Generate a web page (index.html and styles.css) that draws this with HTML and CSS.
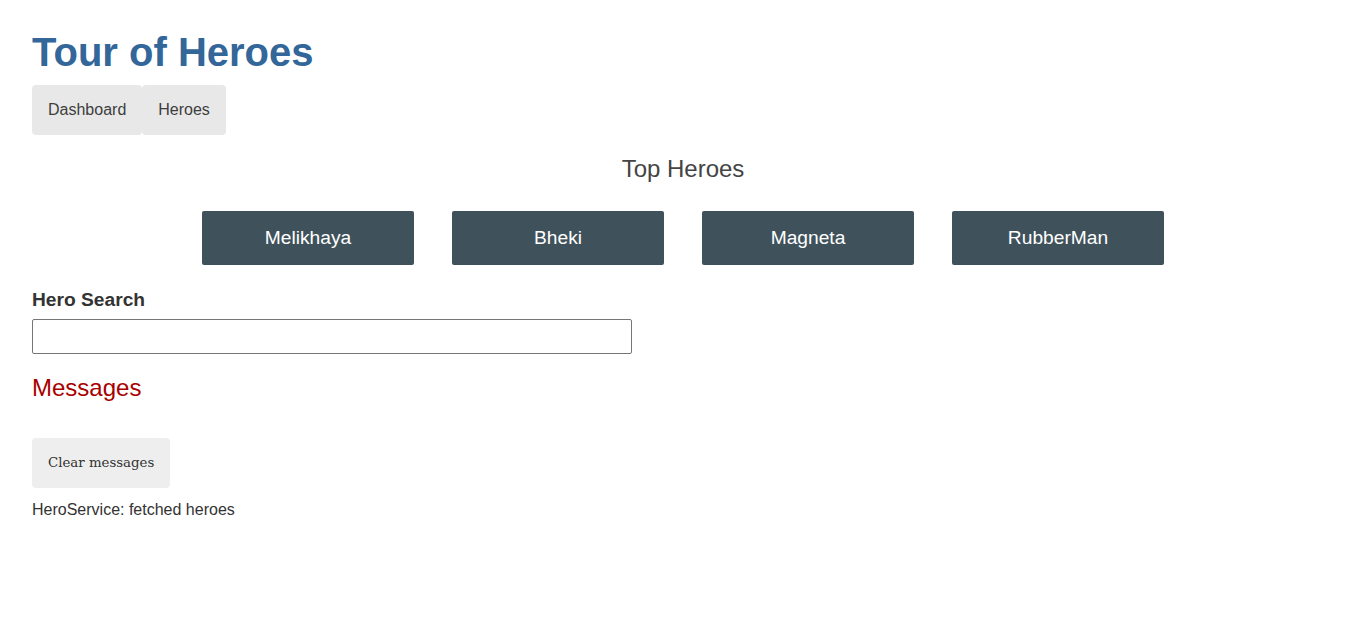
FILE: index.html
```html
<!DOCTYPE html>
<html>
<head>
<meta charset="utf-8">
<title>Tour of Heroes</title>
<link rel="stylesheet" href="styles.css">
</head>
<body>
<div class="app">
  <h1 class="app-title">Tour of Heroes</h1>
  <nav class="main-nav"><a class="nav-link" href="#">Dashboard</a><a class="nav-link" href="#">Heroes</a></nav>

  <div class="dashboard">
    <h2 class="dash-title">Top Heroes</h2>
    <div class="heroes-menu">
      <a class="hero-card" href="#">Melikhaya</a>
      <a class="hero-card" href="#">Bheki</a>
      <a class="hero-card" href="#">Magneta</a>
      <a class="hero-card" href="#">RubberMan</a>
    </div>
    <div class="search-component">
      <label class="search-label" for="search-box">Hero Search</label>
      <input class="search-input" id="search-box" type="text">
      <ul class="search-result"></ul>
    </div>
  </div>

  <div class="messages">
    <h2 class="messages-title">Messages</h2>
    <button class="clear" type="button">Clear messages</button>
    <div class="message-line">HeroService: fetched heroes</div>
  </div>
</div>
</body>
</html>
```

FILE: styles.css
```css
body {
  margin: 0;
  padding: 30px 32px 32px;
  color: #333;
  font-family: Arial, "Liberation Sans", Helvetica, sans-serif;
}

.app-title {
  color: #369;
  font-family: "Liberation Sans", Arial, sans-serif;
  font-size: 250%;
  margin-top: 0;
  margin-bottom: 0;
}

.main-nav {
  display: block;
}

.nav-link {
  padding: 1rem;
  text-decoration: none;
  margin-top: 10px;
  display: inline-block;
  background-color: #e8e8e8;
  color: #3d3d3d;
  border-radius: 4px;
  font-family: "Liberation Sans", Arial, sans-serif;
  font-size: 16px;
}

.dash-title {
  text-align: center;
  color: #444;
  font-family: "Liberation Sans", Arial, sans-serif;
  font-weight: lighter;
  font-size: 1.5em;
  margin: 0.83em 0;
}

.heroes-menu {
  padding: 0;
  margin: auto;
  max-width: 1000px;
  display: flex;
  flex-direction: row;
  flex-wrap: nowrap;
  justify-content: space-around;
  align-content: flex-start;
  align-items: flex-start;
}

.hero-card {
  background-color: #3f525c;
  border-radius: 2px;
  padding: 1rem;
  font-size: 1.2rem;
  text-decoration: none;
  display: inline-block;
  color: #fff;
  text-align: center;
  width: 18%;
  min-width: 70px;
  margin: .5rem auto;
  box-sizing: content-box;
  font-family: "Liberation Sans", Arial, sans-serif;
}

.search-label {
  display: block;
  font-weight: bold;
  font-size: 1.2rem;
  margin-top: 1rem;
  margin-bottom: .5rem;
  font-family: "Liberation Sans", Arial, sans-serif;
}

.search-input {
  padding: .5rem;
  width: 100%;
  max-width: 600px;
  height: 35px;
  box-sizing: border-box;
  display: block;
  border: 1px solid #767676;
  border-radius: 2px;
  font-size: 13.333px;
  font-family: "Liberation Serif", Georgia, serif;
  color: #333;
}

.search-result {
  margin-top: 0;
  padding-left: 0;
  margin-bottom: 17px;
}

.messages-title {
  color: #A80000;
  font-family: "Liberation Sans", Arial, sans-serif;
  font-weight: lighter;
  font-size: 1.5em;
  margin: 0.83em 0;
}

.clear {
  color: #333;
  background-color: #eee;
  border: none;
  margin-bottom: 13px;
  margin-top: 1rem;
  margin-right: 1rem;
  padding: 1rem;
  border-radius: 4px;
  font-size: 13.333px;
  line-height: 18px;
  font-family: "DejaVu Serif", Georgia, serif;
  cursor: pointer;
}

.message-line {
  font-size: 16px;
  font-family: "Liberation Sans", Arial, sans-serif;
}
```
